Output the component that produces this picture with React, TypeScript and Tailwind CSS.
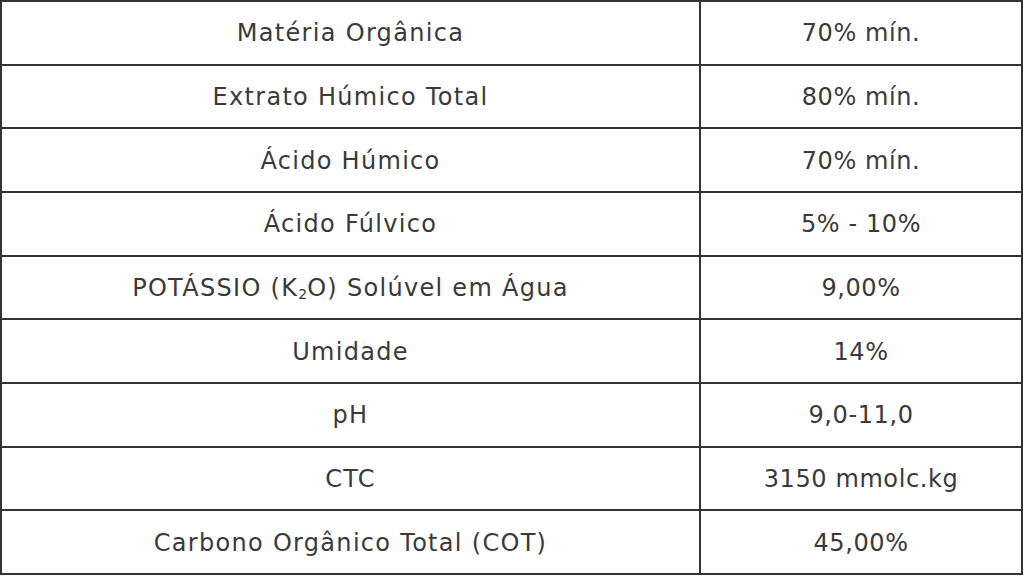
import React from "react";

const rows: [React.ReactNode, string][] = [
  ["Matéria Orgânica", "70% mín."],
  ["Extrato Húmico Total", "80% mín."],
  ["Ácido Húmico", "70% mín."],
  ["Ácido Fúlvico", "5% - 10%"],
  [
    <>
      POTÁSSIO (K<sub className="text-[14px] relative top-[6px] align-baseline tracking-normal">2</sub>O) Solúvel em Água
    </>,
    "9,00%",
  ],
  ["Umidade", "14%"],
  ["pH", "9,0-11,0"],
  ["CTC", "3150 mmolc.kg"],
  ["Carbono Orgânico Total (COT)", "45,00%"],
];

export default function App() {
  return (
    <div className="w-[1024px] h-[576px] bg-white">
      <div
        className="w-[1023px] h-[575px] grid grid-cols-[697px_1fr] grid-rows-9 gap-[2px] p-[2px] bg-[#333333] text-[#3a3a3a] text-[24px]"
        style={{ fontFamily: '"DejaVu Sans", sans-serif', fontWeight: 400 }}
      >
        {rows.map(([a, b], i) => (
          <React.Fragment key={i}>
            <div className="bg-white flex items-center justify-center tracking-[1.3px] pt-[1px]">{a}</div>
            <div className="bg-white flex items-center justify-center tracking-[0.6px] pt-[1px]">{b}</div>
          </React.Fragment>
        ))}
      </div>
    </div>
  );
}
